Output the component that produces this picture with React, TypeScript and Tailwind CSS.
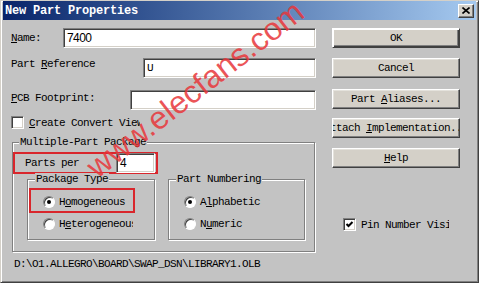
import React from "react";

const Check = ({ checked }: { checked?: boolean }) => (
  <span className="w-[13px] h-[13px] shrink-0 flex items-center justify-center bg-white border border-t-[#808080] border-l-[#808080] border-r-white border-b-white shadow-[inset_1px_1px_0_#404040,inset_-1px_-1px_0_#d4d0c8]">
    {checked && (
      <svg width="9" height="9" viewBox="0 0 9 9">
        <polyline points="1.5,4 3.5,6 7.5,2" fill="none" stroke="#000" strokeWidth="2" />
      </svg>
    )}
  </span>
);

const Radio = ({ on }: { on?: boolean }) => (
  <span className="w-[12px] h-[12px] shrink-0 rounded-full flex items-center justify-center bg-white border border-t-[#808080] border-l-[#808080] border-r-white border-b-white shadow-[inset_1px_1px_0_#404040]">
    {on && <span className="w-[4px] h-[4px] rounded-full bg-black" />}
  </span>
);

const Field = ({ value, className }: { value: string; className: string }) => (
  <div className={`h-[20px] flex items-center pl-[3px] bg-white border border-t-[#808080] border-l-[#808080] border-r-white border-b-white shadow-[inset_1px_1px_0_#404040,inset_-1px_-1px_0_#d4d0c8] ${className}`}>
    {value}
  </div>
);

const Button = ({ children, className = "" }: { children: React.ReactNode; className?: string }) => (
  <div className={`h-[20px] w-full flex items-center justify-center overflow-hidden whitespace-nowrap bg-[#d4d0c8] border border-t-white border-l-white border-r-[#404040] border-b-[#404040] shadow-[inset_-1px_-1px_0_#808080,inset_1px_1px_0_#e4e2dc] ${className}`}>
    <span className="whitespace-pre">{children}</span>
  </div>
);

export default function App() {
  return (
    <div className="relative w-[479px] h-[283px] overflow-hidden bg-[#c3c3c3] text-black text-[11px] leading-[12px] tracking-[-0.6px] font-['Liberation_Mono',monospace] border border-t-[#d4d0c8] border-l-[#d4d0c8] border-r-[#404040] border-b-[#404040] shadow-[inset_1px_1px_0_#fff,inset_-1px_-1px_0_#808080]">
      {/* title bar */}
      <div className="mx-[2px] h-[19px] flex items-center pl-[2px] pr-[2px] bg-linear-to-r from-[#0a246a] to-[#a6caf0]">
        <span className="text-white font-bold text-[12px] tracking-[-0.2px]">New Part Properties</span>
        <span className="ml-auto w-[16px] h-[14px] flex items-center justify-center bg-[#d4d0c8] border border-t-white border-l-white border-r-[#404040] border-b-[#404040] shadow-[inset_-1px_-1px_0_#808080]">
          <svg width="8" height="7" viewBox="0 0 8 7">
            <path d="M0.5 0.5 L7.5 6.5 M7.5 0.5 L0.5 6.5" stroke="#000" strokeWidth="1.6" />
          </svg>
        </span>
      </div>

      <div className="flex pt-[8px]">
        {/* left column */}
        <div className="ml-[10px] w-[305px] flex flex-col">
          <div className="h-[20px] flex items-center">
            <span className="w-[52px]"><u>N</u>ame:</span>
            <Field value="7400" className="flex-1 font-['Liberation_Sans',sans-serif] text-[12px] tracking-[-0.6px]" />
          </div>
          <div className="mt-[10px] h-[20px] flex items-start">
            <span className="w-[132px]">Part <u>R</u>eference</span>
            <Field value="U" className="flex-1" />
          </div>
          <div className="mt-[12px] h-[20px] flex items-start">
            <span className="w-[119px] mt-[2px]"><u>P</u>CB Footprint:</span>
            <Field value="" className="flex-1" />
          </div>
          <div className="mt-[6px] h-[13px] flex items-center">
            <Check />
            <span className="ml-[5px] w-[111px] overflow-hidden whitespace-nowrap"><u>C</u>reate Convert View</span>
          </div>

          <fieldset className="mt-[7px] ml-[1px] w-[303px] pb-[11px] border border-[#808080] shadow-[inset_1px_1px_0_#fff,1px_1px_0_#fff]">
            <legend className="ml-[6px] px-[1px] bg-[#c3c3c3]">Multiple-Part Package</legend>
            <div className="mt-[4px] w-[145px] h-[22px] flex items-center pl-[10px] border-2 border-[#d9262c]">
              <span>Parts per</span>
              <Field value="4" className="ml-auto mr-[1px] w-[39px] h-[19px] font-['Liberation_Sans',sans-serif] text-[12px]" />
            </div>
            <div className="-mt-px flex">
              <fieldset className="ml-[14px] w-[128px] h-[67px] border border-[#808080] shadow-[inset_1px_1px_0_#fff,1px_1px_0_#fff]">
                <legend className="ml-[7px] px-[1px] bg-[#c3c3c3]">Package Type</legend>
                <div className="ml-[1px] mt-[3px] w-[106px] h-[25px] flex items-center pt-[3px] pl-[12px] border-2 border-[#d9262c]">
                  <Radio on />
                  <span className="ml-[4px]">H<u>o</u>mogeneous</span>
                </div>
                <div className="mt-[5px] h-[12px] flex items-center pl-[15px]">
                  <Radio />
                  <span className="ml-[4px] w-[74px] overflow-hidden whitespace-nowrap">H<u>e</u>terogeneous</span>
                </div>
              </fieldset>
              <fieldset className="ml-[13px] w-[137px] h-[67px] border border-[#808080] shadow-[inset_1px_1px_0_#fff,1px_1px_0_#fff]">
                <legend className="ml-[7px] px-[1px] bg-[#c3c3c3]">Part Numbering</legend>
                <div className="ml-[1px] mt-[3px] h-[25px] flex items-center pt-[3px] pl-[12px] border-2 border-transparent">
                  <Radio on />
                  <span className="ml-[4px]">A<u>l</u>phabetic</span>
                </div>
                <div className="mt-[5px] h-[12px] flex items-center pl-[15px]">
                  <Radio />
                  <span className="ml-[4px]">N<u>u</u>meric</span>
                </div>
              </fieldset>
            </div>
          </fieldset>

          <div className="mt-[6px] ml-[3px] whitespace-nowrap">D:\O1.ALLEGRO\BOARD\SWAP_DSN\LIBRARY1.OLB</div>
        </div>

        {/* right column */}
        <div className="ml-[16px] w-[128px] flex flex-col">
          <Button className="border-black shadow-[inset_1px_1px_0_#fff,inset_-1px_-1px_0_#404040,inset_-2px_-2px_0_#808080]">OK</Button>
          <Button className="mt-[10px]">Cancel</Button>
          <Button className="mt-[11px]">Part <u>A</u>liases...</Button>
          <Button className="mt-[9px]">Attach <u>I</u>mplementation...</Button>
          <Button className="mt-[10px]"><u>H</u>elp</Button>
          <div className="mt-[50px] ml-[11px] h-[13px] flex items-center">
            <Check checked />
            <span className="ml-[5px] w-[88px] overflow-hidden whitespace-nowrap">Pin Number Visible</span>
          </div>
        </div>
      </div>

      {/* site watermark over the dialog */}
      <span className="pointer-events-none absolute left-[194px] top-[88px] -translate-x-1/2 -translate-y-1/2 -rotate-[38deg] whitespace-nowrap text-[32px] leading-none tracking-normal font-['Liberation_Sans',sans-serif] text-[#e8363a]/85">
        www.elecfans.com
      </span>
    </div>
  );
}
